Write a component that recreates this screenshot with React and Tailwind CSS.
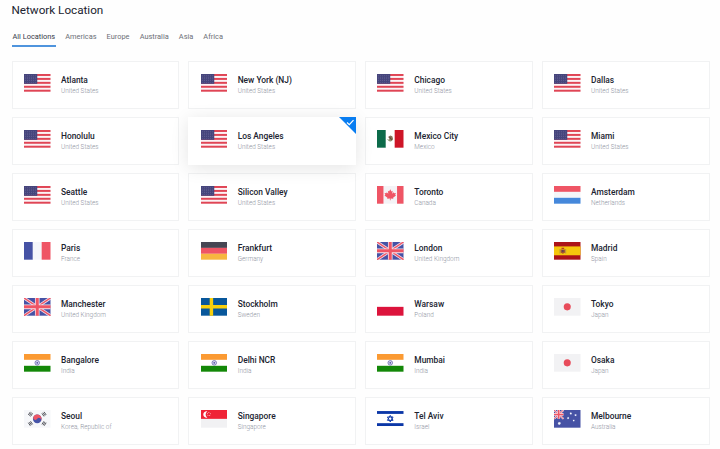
import React from "react";

const RED = "#ef5565";
const NAVY = "#4652a5";

function starPoints(cx, cy, r, inner, n) {
  return Array.from({ length: n * 2 }, (_, i) => {
    const a = (Math.PI * i) / n - Math.PI / 2;
    const d = i % 2 ? r * inner : r;
    return `${cx + d * Math.cos(a)},${cy + d * Math.sin(a)}`;
  }).join(" ");
}

function Bands({ colors, vertical }) {
  return colors.map((c, i) =>
    vertical ? (
      <rect key={i} x={i * 10} width="10" height="20" fill={c} />
    ) : (
      <rect key={i} y={(i * 20) / 3} width="30" height={20 / 3} fill={c} />
    )
  );
}

function Us() {
  return (
    <>
      <rect width="30" height="20" fill="#fbf3f5" />
      {[0, 1, 2, 3, 4].map((i) => (
        <rect key={i} y={(i * 40) / 9} width="30" height={20 / 9} fill="#e04555" />
      ))}
      <rect width="15" height="11.1" fill="#46457c" />
      {[0, 1, 2, 3, 4].map((r) =>
        [0, 1, 2, 3, 4, 5].map((c) => (
          <circle key={`${r}${c}`} cx={1.4 + c * 2.4} cy={1.4 + r * 2.05} r="0.38" fill="#8f8eba" />
        ))
      )}
    </>
  );
}

function Uk() {
  return (
    <>
      <rect width="30" height="20" fill={NAVY} />
      <path d="M0 0L30 20M30 0L0 20" stroke="#f0dfea" strokeWidth="3.4" />
      <path d="M0 0L30 20M30 0L0 20" stroke={RED} strokeWidth="1.6" />
      <path d="M15 0V20M0 10H30" stroke="#f5e5ed" strokeWidth="5.2" />
      <path d="M15 0V20M0 10H30" stroke={RED} strokeWidth="3.4" />
    </>
  );
}

function Mexico() {
  return (
    <>
      <Bands vertical colors={["#0c6b4a", "#ffffff", "#ce1527"]} />
      <path d="M12.2 10.3a2.9 2.9 0 0 0 5.6 0" fill="none" stroke="#6f8b54" strokeWidth="1" />
      <path d="M12.7 7.8l2.3-1.6 2.3 1 .9 2.6-1.9 2.4-2.8-.4.5-2z" fill="#89745c" />
      <path d="M14 7.6l2.6 3.4" stroke="#47402f" strokeWidth="1" />
    </>
  );
}

function Canada() {
  return (
    <>
      <rect width="30" height="20" fill="#f4f3f6" />
      <rect width="7.3" height="20" fill={RED} />
      <rect x="22.7" width="7.3" height="20" fill={RED} />
      <path
        d="M15 3.7l1.3 2.4 1.4-.7-.5 3.5 1.8-1.7.4 1 2-.3-.8 2.1.9.7-3.3 2.6.3 1.1-3.1-.4V16h-.8v-2l-3.1.4.3-1.1-3.3-2.6.9-.7-.8-2.1 2 .3.4-1 1.8 1.7-.5-3.5 1.4.7z"
        fill={RED}
      />
    </>
  );
}

function Spain() {
  return (
    <>
      <rect width="30" height="20" fill="#ac1318" />
      <rect y="5" width="30" height="10" fill="#f5c60c" />
      <path d="M7.5 8.4h5v3.5q-2.5 2.6-5 0z" fill="#a6532f" />
      <path d="M6.8 8v5M13.2 8v5" stroke="#9c8253" strokeWidth=".8" />
      <path d="M8.5 7.2h3" stroke="#b83b28" strokeWidth="1.4" />
      <circle cx="10" cy="10.2" r="1.1" fill="#5a4257" />
    </>
  );
}

function India() {
  return (
    <>
      <Bands colors={["#fb9a32", "#ffffff", "#138808"]} />
      <circle cx="15" cy="10" r="2.6" fill="#d9d9f1" stroke="#5a5aa5" strokeWidth=".8" />
      <circle cx="15" cy="10" r="1" fill="#5252a0" />
    </>
  );
}

function Korea() {
  return (
    <>
      <rect width="30" height="20" fill="#f6f7fa" />
      <circle cx="15" cy="10" r="4.9" fill="#4654a8" />
      <path d="M10.9 7.3A4.9 4.9 0 0 1 19.1 12.7A2.45 2.45 0 0 0 15 10A2.45 2.45 0 0 1 10.9 7.3Z" fill={RED} />
      {[
        [7.3, 4.7, 34],
        [22.7, 4.7, -34],
        [7.3, 15.3, -34],
        [22.7, 15.3, 34],
      ].map(([x, y, a], i) => (
        <path
          key={i}
          transform={`translate(${x} ${y}) rotate(${a})`}
          d="M-1.5-2.1V2.1M0-2.1V2.1M1.5-2.1V2.1"
          stroke="#4b4d55"
          strokeWidth=".95"
        />
      ))}
    </>
  );
}

function Singapore() {
  return (
    <>
      <rect width="30" height="20" fill="#f1f1f3" />
      <rect width="30" height="10" fill="#ef2336" />
      <path d="M7.2 1.6a3.6 3.6 0 1 0 0 6.9a4 4 0 0 1 0-6.9z" fill="#fff" />
      {[
        [8.9, 2.9],
        [7.3, 4.2],
        [10.5, 4.2],
        [7.9, 6.3],
        [9.9, 6.3],
      ].map(([x, y], i) => (
        <circle key={i} cx={x} cy={y} r=".55" fill="#fff" />
      ))}
    </>
  );
}

function Israel() {
  return (
    <>
      <rect width="30" height="20" fill="#fff" />
      <rect y="1.2" width="30" height="3.2" fill="#0b37a7" />
      <rect y="14.9" width="30" height="3.2" fill="#0b37a7" />
      <path d="M15 6.1l3.2 5.6h-6.4zM15 13.5l3.2-5.6h-6.4z" fill="none" stroke="#0b37a7" strokeWidth="1.1" />
    </>
  );
}

function Australia() {
  return (
    <>
      <rect width="30" height="20" fill={NAVY} />
      <path d="M0 0L10.7 10M10.7 0L0 10" stroke="#f6dfe8" strokeWidth="2.2" />
      <path d="M0 0L10.7 10M10.7 0L0 10" stroke={RED} strokeWidth="1" />
      <path d="M5.3 0V10M0 5H10.7" stroke="#fbe9ef" strokeWidth="3" />
      <path d="M5.3 0V10M0 5H10.7" stroke={RED} strokeWidth="1.8" />
      {[
        [6, 15.2, 2],
        [19, 4, 1.4],
        [24.4, 5.8, 1.4],
        [16, 9.1, 1.4],
        [22.3, 11.9, 1.2],
      ].map(([x, y, r], i) => (
        <polygon key={i} points={starPoints(x, y, r, 0.6, 7)} fill="#f4f6ff" />
      ))}
    </>
  );
}

const FLAGS = {
  us: <Us />,
  uk: <Uk />,
  mx: <Mexico />,
  ca: <Canada />,
  nl: <Bands colors={[RED, "#f5f6f8", "#4588db"]} />,
  fr: <Bands vertical colors={[NAVY, "#f5f6fa", RED]} />,
  de: <Bands colors={["#464653", RED, "#f7b740"]} />,
  es: <Spain />,
  se: (
    <>
      <rect width="30" height="20" fill="#08579b" />
      <path d="M11.8 0V20M0 10H30" stroke="#f8d00c" strokeWidth="3.9" />
    </>
  ),
  pl: (
    <>
      <rect width="30" height="20" fill="#fff" />
      <rect y="10" width="30" height="10" fill="#dc143c" />
    </>
  ),
  jp: (
    <>
      <rect width="30" height="20" fill="#f2f2f4" />
      <circle cx="15" cy="10" r="4" fill="#e84c5b" />
    </>
  ),
  in: <India />,
  kr: <Korea />,
  sg: <Singapore />,
  il: <Israel />,
  au: <Australia />,
};

const LOCATIONS = [
  ["Atlanta", "United States", "us"],
  ["New York (NJ)", "United States", "us"],
  ["Chicago", "United States", "us"],
  ["Dallas", "United States", "us"],
  ["Honolulu", "United States", "us"],
  ["Los Angeles", "United States", "us"],
  ["Mexico City", "Mexico", "mx"],
  ["Miami", "United States", "us"],
  ["Seattle", "United States", "us"],
  ["Silicon Valley", "United States", "us"],
  ["Toronto", "Canada", "ca"],
  ["Amsterdam", "Netherlands", "nl"],
  ["Paris", "France", "fr"],
  ["Frankfurt", "Germany", "de"],
  ["London", "United Kingdom", "uk"],
  ["Madrid", "Spain", "es"],
  ["Manchester", "United Kingdom", "uk"],
  ["Stockholm", "Sweden", "se"],
  ["Warsaw", "Poland", "pl"],
  ["Tokyo", "Japan", "jp"],
  ["Bangalore", "India", "in"],
  ["Delhi NCR", "India", "in"],
  ["Mumbai", "India", "in"],
  ["Osaka", "Japan", "jp"],
  ["Seoul", "Korea, Republic of", "kr"],
  ["Singapore", "Singapore", "sg"],
  ["Tel Aviv", "Israel", "il"],
  ["Melbourne", "Australia", "au"],
];

const TABS = ["All Locations", "Americas", "Europe", "Australia", "Asia", "Africa"];

function LocationCard({ city, country, flag, selected }) {
  return (
    <div
      className={
        "relative flex h-12 items-start border pt-[12px] pl-[11.5px] " +
        (selected
          ? "z-10 border-white bg-white shadow-[0_3px_18px_rgba(0,0,0,0.10)]"
          : "border-[#f1f2f3] bg-white")
      }
    >
      <svg viewBox="0 0 30 20" preserveAspectRatio="none" className="h-[17.7px] w-[26.5px] shrink-0">
        {FLAGS[flag]}
      </svg>
      <div className="ml-[10.5px] whitespace-nowrap">
        <div className="mt-px text-[8.4px] leading-[10px] font-medium text-[#20232f]">{city}</div>
        <div className="mt-[2px] text-[6.4px] leading-[9px] font-light text-[#8f94a2]">{country}</div>
      </div>
      {selected && (
        <svg viewBox="0 0 17 17" className="absolute -top-px -right-px size-[17px]">
          <path d="M0 0H17V17Z" fill="#087df1" />
          <path d="M8 5.5l2.3 2.2 4.2-4.5" fill="none" stroke="#fff" strokeWidth="1.2" />
        </svg>
      )}
    </div>
  );
}

export default function App() {
  return (
    <main className="h-[449px] w-[720px] overflow-hidden bg-[#fefefe] pt-[3px] pl-[11.5px] font-['Roboto',sans-serif]">
      <h1 className="text-[11.7px] leading-[14px] text-[#20232f]">Network Location</h1>
      <nav className="mt-[13px] flex h-[17px] gap-[8.1px] text-[7.4px] leading-[14px] text-[#6d7077]">
        {TABS.map((tab, i) => (
          <div
            key={tab}
            className={
              "px-px whitespace-nowrap " +
              (i === 0 ? "border-b-2 border-[#4f94dd] text-[#363a48]" : "")
            }
          >
            {tab}
          </div>
        ))}
      </nav>
      <div className="mt-[14px] grid w-[698px] grid-cols-4 gap-x-[8.7px] gap-y-2">
        {LOCATIONS.map(([city, country, flag]) => (
          <LocationCard
            key={city}
            city={city}
            country={country}
            flag={flag}
            selected={city === "Los Angeles"}
          />
        ))}
      </div>
    </main>
  );
}
